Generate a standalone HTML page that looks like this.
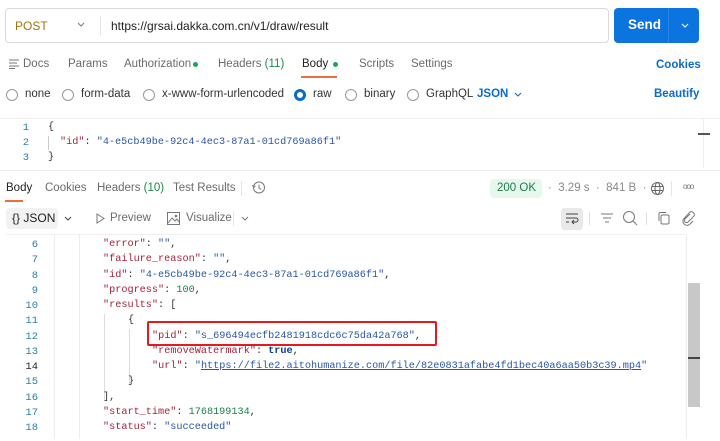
<!DOCTYPE html>
<html><head><meta charset="utf-8"><style>
*{margin:0;padding:0;box-sizing:border-box}
body{width:720px;height:439px;background:#fff;font-family:"Liberation Sans",sans-serif;position:relative;overflow:hidden;color:#212121}
.a{position:absolute;white-space:nowrap}
.t{font-size:11.5px;color:#6b6b6b}
.mono{font-family:"Liberation Mono",monospace;font-size:10.2px}
.ln{position:absolute;width:40px;text-align:right;color:#2c7fa3;font-family:"Liberation Mono",monospace;font-size:10.5px}
.k{color:#a1243c}.s{color:#2857a4}.n{color:#1b7d4a}.p{color:#333}.b{color:#0a3d8f;font-weight:bold}
.radio{position:absolute;width:12px;height:12px;border:1px solid #999;border-radius:50%;top:89px}
</style></head><body>
<div class="a" style="left:5px;top:8px;width:604px;height:35px;border:1px solid #d9d9d9;border-radius:4px"></div>
<div class="a" style="left:15px;top:19px;font-size:12px;color:#a4720c">POST</div>
<svg class="a" style="left:77px;top:22px" width="8" height="6"><path d="M1 1l3 3 3-3" stroke="#777" fill="none"/></svg>
<div class="a" style="left:100px;top:16px;width:1px;height:20px;background:#e5e5e5"></div>
<div class="a" style="left:111px;top:19px;font-size:12px;color:#222">https://grsai.dakka.com.cn/v1/draw/result</div>
<div class="a" style="left:614px;top:8px;width:85px;height:35px;background:#0b74de;border-radius:4px"></div>
<div class="a" style="left:628px;top:17px;font-size:13.5px;color:#fff;font-weight:bold">Send</div>
<div class="a" style="left:668px;top:8px;width:1px;height:35px;background:#2a86e4"></div>
<svg class="a" style="left:681px;top:23px" width="8" height="6"><path d="M1 1l3 3 3-3" stroke="#fff" fill="none"/></svg>
<svg class="a" style="left:9px;top:59px" width="11" height="10"><path d="M0 1h10M0 4h8M0 7h10M0 9.5h6" stroke="#777" stroke-width="1"/></svg>
<div class="a t" style="left:23px;top:58px">Docs</div>
<div class="a t" style="left:68px;top:58px">Params</div>
<div class="a t" style="left:124px;top:58px">Authorization</div>
<div class="a" style="left:193px;top:62px;width:5px;height:5px;border-radius:50%;background:#1fa35b"></div>
<div class="a t" style="left:218px;top:58px">Headers <span style="color:#1b8a4a">(11)</span></div>
<div class="a t" style="left:302px;top:58px;color:#222">Body</div>
<div class="a" style="left:333px;top:62px;width:5px;height:5px;border-radius:50%;background:#1fa35b"></div>
<div class="a" style="left:301px;top:76px;width:36px;height:2px;background:#f26b3a"></div>
<div class="a t" style="left:359px;top:58px">Scripts</div>
<div class="a t" style="left:411px;top:58px">Settings</div>
<div class="a" style="left:656px;top:59px;font-size:11.5px;color:#0b6bcb;font-weight:bold">Cookies</div>
<div class="radio" style="left:6px"></div><div class="a t" style="left:25px;top:88px;color:#333">none</div>
<div class="radio" style="left:62px"></div><div class="a t" style="left:81px;top:88px;color:#333">form-data</div>
<div class="radio" style="left:143px"></div><div class="a t" style="left:162px;top:88px;color:#333">x-www-form-urlencoded</div>
<div class="radio" style="left:294px;border:3.5px solid #0b6bcb"></div><div class="a t" style="left:313px;top:88px;color:#333">raw</div>
<div class="radio" style="left:345px"></div><div class="a t" style="left:364px;top:88px;color:#333">binary</div>
<div class="radio" style="left:407px"></div><div class="a t" style="left:426px;top:88px;color:#333">GraphQL</div>
<div class="a" style="left:477px;top:88px;font-size:11.5px;color:#0b6bcb;font-weight:bold">JSON</div>
<svg class="a" style="left:514px;top:92px" width="8" height="6"><path d="M1 1l3 3 3-3" stroke="#0b6bcb" fill="none"/></svg>
<div class="a" style="left:654px;top:88px;font-size:11.5px;color:#0b6bcb;font-weight:bold">Beautify</div>
<div class="a" style="left:0;top:118px;width:720px;height:1px;background:#f0f0f0"></div>
<div class="a" style="left:703px;top:118px;width:1px;height:50px;background:#eee"></div>
<div class="a" style="left:698px;top:133px;width:12px;height:2px;background:#555"></div>
<div class="ln" style="left:-11px;top:122px">1</div><div class="a mono p" style="left:48px;top:122px">{</div>
<div class="ln" style="left:-11px;top:137px">2</div><div class="a" style="left:48px;top:136px;width:1px;height:14px;background:#ccc"></div><div class="a mono" style="left:60px;top:137px"><span class="k">"id"</span><span class="p">: </span><span class="s">"4-e5cb49be-92c4-4ec3-87a1-01cd769a86f1"</span></div>
<div class="ln" style="left:-11px;top:152px">3</div><div class="a mono p" style="left:48px;top:152px">}</div>
<div class="a" style="left:0;top:170px;width:720px;height:1px;background:#ececec"></div>
<div class="a" style="left:6px;top:182px;font-size:11.5px;color:#222">Body</div>
<div class="a" style="left:5px;top:200px;width:18px;height:2px;background:#f26b3a"></div>
<div class="a t" style="left:45px;top:182px">Cookies</div>
<div class="a t" style="left:97px;top:182px">Headers <span style="color:#1b8a4a">(10)</span></div>
<div class="a t" style="left:173px;top:182px">Test Results</div>
<div class="a" style="left:241px;top:181px;width:1px;height:15px;background:#e5e5e5"></div>
<svg class="a" style="left:251px;top:180px" width="15" height="15"><circle cx="8" cy="7.5" r="5.5" stroke="#777" fill="none"/><path d="M8 4.5v3.5l2 1.5M1.5 5l1 2.5 2-1.5" stroke="#777" fill="none"/></svg>
<div class="a" style="left:490px;top:179px;width:52px;height:19px;background:#e6f7ee;border-radius:4px"></div>
<div class="a" style="left:497px;top:182px;font-size:11.5px;color:#1b7d4a">200 OK</div>
<div class="a" style="left:548px;top:182px;font-size:11.5px;color:#888">·&nbsp;&nbsp;3.29 s&nbsp;&nbsp;·&nbsp;&nbsp;841 B&nbsp;&nbsp;·</div>
<svg class="a" style="left:650px;top:181px" width="15" height="15"><circle cx="7.5" cy="7.5" r="6" stroke="#666" fill="none"/><ellipse cx="7.5" cy="7.5" rx="2.5" ry="6" stroke="#666" fill="none"/><path d="M1.5 5.5h12M1.5 9.5h12" stroke="#666"/></svg>
<div class="a" style="left:671px;top:181px;width:1px;height:15px;background:#e5e5e5"></div>
<div class="a" style="left:683px;top:182px;font-size:8px;color:#777;letter-spacing:-1px">ooo</div>
<div class="a" style="left:6px;top:208px;width:52px;height:21px;background:#f2f2f2;border-radius:4px"></div>
<div class="a" style="left:12px;top:211px;font-size:12px;color:#222">{} JSON</div>
<svg class="a" style="left:64px;top:216px" width="8" height="6"><path d="M1 1l3 3 3-3" stroke="#444" fill="none"/></svg>
<svg class="a" style="left:96px;top:213px" width="10" height="11"><path d="M1 1l7 4.5-7 4.5z" stroke="#777" fill="none"/></svg>
<div class="a t" style="left:110px;top:212px">Preview</div>
<svg class="a" style="left:167px;top:212px" width="13" height="13"><rect x="0.5" y="0.5" width="12" height="12" stroke="#777" fill="none"/><path d="M1 11l4-5 3 3 2-2 2 3" stroke="#777" fill="none"/><circle cx="9" cy="4" r="1.3" fill="#777"/></svg>
<div class="a t" style="left:186px;top:212px">Visualize</div>
<div class="a" style="left:233px;top:211px;width:1px;height:15px;background:#e5e5e5"></div>
<svg class="a" style="left:241px;top:216px" width="8" height="6"><path d="M1 1l3 3 3-3" stroke="#777" fill="none"/></svg>
<div class="a" style="left:561px;top:208px;width:22px;height:22px;background:#e9e9e9;border-radius:3px"></div>
<svg class="a" style="left:565px;top:212px" width="14" height="13"><path d="M1 2h12M1 6h10a2 2 0 010 4H7M9 8l-2 2 2 2M1 10h3" stroke="#444" fill="none"/></svg>
<div class="a" style="left:589px;top:212px;width:1px;height:13px;background:#e0e0e0"></div>
<svg class="a" style="left:600px;top:212px" width="14" height="13"><path d="M1 2h12M3 6h8M5 10h4" stroke="#777"/></svg>
<svg class="a" style="left:622px;top:210px" width="16" height="16"><circle cx="7" cy="7" r="5.5" stroke="#777" fill="none"/><path d="M11 11l4 4" stroke="#777"/></svg>
<div class="a" style="left:646px;top:212px;width:1px;height:13px;background:#e0e0e0"></div>
<svg class="a" style="left:657px;top:211px" width="14" height="15"><rect x="4" y="4" width="8" height="9" rx="1.5" stroke="#777" fill="none"/><path d="M2 10V3a1.5 1.5 0 011.5-1.5H9" stroke="#777" fill="none"/></svg>
<svg class="a" style="left:681px;top:211px" width="15" height="15"><path d="M9 3l-5 5a2 2 0 003 3l6-6a3 3 0 00-4-4L3 7.5a4 4 0 006 5.5l3-3" stroke="#777" fill="none"/></svg>
<div class="a" style="left:6px;top:234px;width:680px;height:1px;background:#f0f0f0"></div>
<div class="a" style="left:54px;top:235px;width:1px;height:204px;background:#ececec"></div>
<div class="a" style="left:79px;top:235px;width:1px;height:204px;background:#ececec"></div>
<div class="a" style="left:686px;top:235px;width:1px;height:204px;background:#ececec"></div>
<div class="a" style="left:688px;top:283px;width:12px;height:124px;background:#c8c8c8"></div>
<div class="a" style="left:688px;top:357px;width:12px;height:2px;background:#444"></div>
<div class="a" style="left:104px;top:314px;width:1px;height:86px;background:#ddd"></div>
<div class="a" style="left:129px;top:329px;width:1px;height:55px;background:#ddd"></div>
<div style="position:absolute;left:0;top:2px;width:720px;height:439px">
<div class="ln" style="left:-2px;top:237px">6</div><div class="a mono" style="left:103px;top:237px"><span class="k">"error"</span><span class="p">: </span><span class="s">""</span><span class="p">,</span></div>
<div class="ln" style="left:-2px;top:252px">7</div><div class="a mono" style="left:103px;top:252px"><span class="k">"failure_reason"</span><span class="p">: </span><span class="s">""</span><span class="p">,</span></div>
<div class="ln" style="left:-2px;top:268px">8</div><div class="a mono" style="left:103px;top:268px"><span class="k">"id"</span><span class="p">: </span><span class="s">"4-e5cb49be-92c4-4ec3-87a1-01cd769a86f1"</span><span class="p">,</span></div>
<div class="ln" style="left:-2px;top:283px">9</div><div class="a mono" style="left:103px;top:283px"><span class="k">"progress"</span><span class="p">: </span><span class="n">100</span><span class="p">,</span></div>
<div class="ln" style="left:-2px;top:298px">10</div><div class="a mono" style="left:103px;top:298px"><span class="k">"results"</span><span class="p">: [</span></div>
<div class="ln" style="left:-2px;top:313px">11</div><div class="a mono p" style="left:128px;top:313px">{</div>
<div class="ln" style="left:-2px;top:329px">12</div><div class="a mono" style="left:152px;top:329px"><span class="k">"pid"</span><span class="p">: </span><span class="s">"s_696494ecfb2481918cdc6c75da42a768"</span><span class="p">,</span></div>
<div class="a" style="left:147px;top:319px;width:290px;height:25px;border:2px solid #e8191e;border-radius:2px"></div>
<div class="ln" style="left:-2px;top:344px">13</div><div class="a mono" style="left:152px;top:344px"><span class="k">"removeWatermark"</span><span class="p">: </span><span class="b">true</span><span class="p">,</span></div>
<div class="ln" style="left:-2px;top:359px;color:#222">14</div><div class="a mono" style="left:152px;top:359px"><span class="k">"url"</span><span class="p">: </span><span class="s">"<u>https://file2.aitohumanize.com/file/82e0831afabe4fd1bec40a6aa50b3c39.mp4</u>"</span></div>
<div class="ln" style="left:-2px;top:374px">15</div><div class="a mono p" style="left:128px;top:374px">}</div>
<div class="ln" style="left:-2px;top:390px">16</div><div class="a mono p" style="left:103px;top:390px">],</div>
<div class="ln" style="left:-2px;top:405px">17</div><div class="a mono" style="left:103px;top:405px"><span class="k">"start_time"</span><span class="p">: </span><span class="n">1768199134</span><span class="p">,</span></div>
<div class="ln" style="left:-2px;top:420px">18</div><div class="a mono" style="left:103px;top:420px"><span class="k">"status"</span><span class="p">: </span><span class="s">"succeeded"</span></div>
</div>
</body></html>
